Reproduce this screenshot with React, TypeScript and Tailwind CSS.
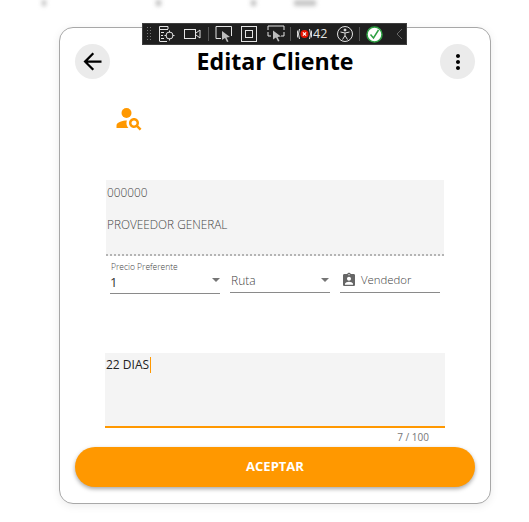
import { MdArrowBack, MdAssignmentInd, MdMoreVert, MdPersonSearch } from "react-icons/md";

function DevToolbar() {
  return (
    <div className="absolute left-[82px] top-[-5px] z-10 flex h-[22px] w-[265px] items-center border border-[#3f3f3f] bg-[#1f1f1f] text-[#e4e4e4]">
      <div className="ml-[3px] h-[16px] w-[6px] bg-[radial-gradient(#777_1px,transparent_1px)] bg-[length:3px_3px]" />
      <svg className="ml-[6px]" width="18" height="18" viewBox="0 0 18 18" fill="none" stroke="currentColor">
        <path d="M1.5 16V1.5H10V4M1.5 4.5H10M3 7.5h3M3 10.5h2M3 13.5h3M1.5 16.5H9" />
        <circle cx="11.5" cy="10.5" r="3.5" />
        <path d="M11.5 5.5v2M11.5 13.5v2M6.5 10.5h2M14.5 10.5h2" />
      </svg>
      <svg className="ml-[8px]" width="18" height="14" viewBox="0 0 18 14" fill="none" stroke="currentColor">
        <rect x="0.5" y="2.5" width="11" height="9" />
        <path d="M12 6l4-3v8l-4-3" />
      </svg>
      <div className="ml-[6px] h-[14px] w-px bg-[#555]" />
      <svg className="ml-[6px]" width="18" height="18" viewBox="0 0 18 18">
        <path d="M6 13.5H1V1.5H16.5V11" fill="none" stroke="currentColor" />
        <path d="M7 6l8 6-3.5.5 2 4-1.5.5-2-4L7 15z" fill="#bdbdbd" />
      </svg>
      <svg className="ml-[8px]" width="16" height="16" viewBox="0 0 16 16" fill="none" stroke="currentColor">
        <rect x="0.5" y="0.5" width="15" height="15" />
        <rect x="4.5" y="4.5" width="7" height="7" />
      </svg>
      <svg className="ml-[10px]" width="18" height="18" viewBox="0 0 18 18">
        <path d="M1 5V1H17V5M1 7V11H4M17 7V11H14" fill="none" stroke="currentColor" />
        <path d="M6 5.5l8 6-3.5.5 2 4-1.5.5-2-4L6 14.5z" fill="#bdbdbd" />
      </svg>
      <div className="ml-[5px] h-[14px] w-px bg-[#555]" />
      <svg className="ml-[6px]" width="15" height="14" viewBox="0 0 15 14" fill="none">
        <path d="M2.500 2Q0.500 7 2.500 12M0.700 3.500Q0 7 0.700 10.500M12.500 2Q14.500 7 12.500 12M14.300 3.500Q15 7 14.300 10.500" stroke="#e4e4e4" />
        <circle cx="7.500" cy="7" r="4" fill="#e51400" />
        <path d="M5.900 5.400l3.200 3.200M9.100 5.400L5.900 8.600" stroke="#fff" strokeWidth="1.200" />
      </svg>
      <span className="ml-px text-[12.500px] leading-none">42</span>
      <svg className="ml-[10px]" width="16" height="16" viewBox="0 0 16 16" fill="none" stroke="currentColor">
        <circle cx="8" cy="8" r="7.500" />
        <circle cx="8" cy="4" r="1" fill="currentColor" />
        <path d="M3.500 6L8 7l4.500-1M8 7v2.500M8 9.500L5.500 13.500M8 9.500l2.500 4" />
      </svg>
      <div className="ml-[6px] h-[14px] w-px bg-[#555]" />
      <svg className="ml-[6px]" width="17" height="17" viewBox="0 0 17 17">
        <circle cx="8.500" cy="8.500" r="7.500" fill="#fff" stroke="#2ea043" strokeWidth="1.500" />
        <path d="M4.500 8.500l3 3.500L12.500 4" fill="none" stroke="#2ea043" strokeWidth="1.500" />
      </svg>
      <svg className="ml-[13px]" width="7" height="12" viewBox="0 0 7 12" fill="none" stroke="#666">
        <path d="M6 1L1 6l5 5" />
      </svg>
    </div>
  );
}

export default function App() {
  return (
    <div className="relative h-[522px] w-[529px] overflow-hidden bg-white font-['Open_Sans',sans-serif]">
      <div className="flex h-[27px] items-start pl-[42px] blur-[2px]">
        <span className="h-[6px] w-[4px] bg-[#bdbdbd]" />
        <span className="ml-[110px] h-[6px] w-[5px] bg-[#bdbdbd]" />
        <span className="ml-[90px] h-[6px] w-[5px] bg-[#bdbdbd]" />
        <span className="ml-[38px] h-[6px] w-[22px] bg-[#c4c4c4]" />
      </div>
      <div className="relative ml-[59px] flex h-[477px] w-[432px] flex-col rounded-[14px] border border-[#a8a8a8] bg-white shadow-[0_2px_8px_rgba(0,0,0,0.08)]">
        <DevToolbar />
        <div className="flex items-center justify-between pl-[15px] pr-[15px] pt-[16px]">
          <button className="flex h-[35px] w-[35px] items-center justify-center rounded-full bg-[#ebebeb] text-black">
            <MdArrowBack size={27} />
          </button>
          <h1 className="text-[23.200px] font-bold leading-[35px] text-black">Editar Cliente</h1>
          <button className="flex h-[35px] w-[35px] items-center justify-center rounded-full bg-[#ebebeb] text-black">
            <MdMoreVert size={24} />
          </button>
        </div>

        <div className="ml-[54px] mt-[24px] text-[#ff9800]">
          <MdPersonSearch size={30} />
        </div>

        <div className="mx-[46px] mt-[47px] h-[76px] border-b-2 border-dotted border-[#b4b4b4] bg-[#f4f4f4] pl-px text-[11.800px] font-light text-[#444]">
          <div className="pt-[4px] leading-[17px]">000000</div>
          <div className="pt-[15px] leading-[17px]">PROVEEDOR GENERAL</div>
        </div>

        <div className="mx-[50px] mt-[5px] flex gap-[10px]">
          <div className="w-[110px] border-b border-[#8a8a8a]">
            <div className="pl-px text-[8.500px] font-light leading-[12px] text-[#444]">Precio Preferente</div>
            <div className="flex h-[20px] items-start justify-between pt-[1px] text-[13px] leading-[16px] text-[#333]">
              <span>1</span>
              <span className="mt-[4px] h-0 w-0 border-x-[4px] border-t-[4px] border-x-transparent border-t-[#757575]" />
            </div>
          </div>
          <div className="flex h-[32px] w-[100px] items-end justify-between border-b border-[#8a8a8a] pb-[3px] pl-px">
            <span className="text-[12px] font-light leading-[16px] text-[#444]">Ruta</span>
            <span className="mb-[7px] mr-[1px] h-0 w-0 border-x-[4px] border-t-[4px] border-x-transparent border-t-[#757575]" />
          </div>
          <div className="flex h-[32px] w-[100px] items-center gap-[4px] border-b border-[#8a8a8a] pl-px pt-[7px]">
            <MdAssignmentInd size={16} className="text-[#666]" />
            <span className="text-[11.400px] font-light leading-[16px] text-[#444]">Vendedor</span>
          </div>
        </div>

        <div className="mx-[45px] mt-[59px] h-[75px] border-b-2 border-[#ff9800] bg-[#f4f4f4] pl-px pt-[3px]">
          <div className="flex items-center text-[12px] leading-[18px] text-[#222]">
            22 DIAS
            <span className="ml-px h-[16px] w-px bg-[#ff9800]" />
          </div>
        </div>
        <div className="mx-[45px] mt-[3px] pr-[16px] text-right text-[10px] leading-[13px] text-[#777]">7 / 100</div>

        <button className="mx-[15px] mt-[3px] h-[40px] rounded-[20px] bg-[#ff9800] text-[13px] font-bold text-white shadow-[0_2px_4px_rgba(0,0,0,0.35)]">
          ACEPTAR
        </button>
      </div>
    </div>
  );
}
